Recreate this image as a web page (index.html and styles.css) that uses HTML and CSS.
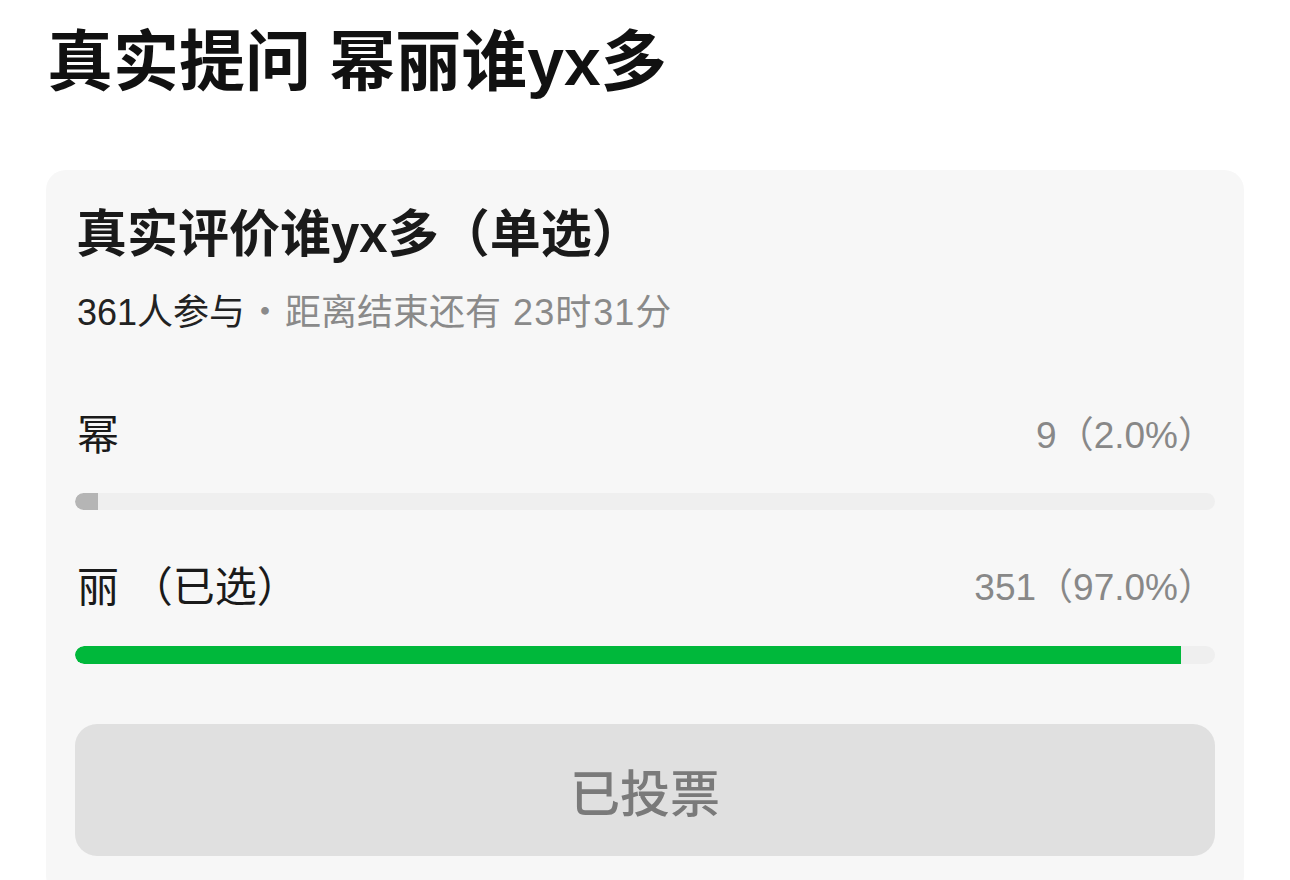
FILE: index.html
```html
<!DOCTYPE html>
<html lang="zh">
<head>
<meta charset="utf-8">
<link rel="stylesheet" href="styles.css">
</head>
<body>
<div class="page">
  <h1 class="title">真实提问 幂丽谁yx多</h1>
  <div class="card">
    <div class="poll-title">真实评价谁yx多（单选）</div>
    <div class="meta"><span class="meta-strong">361人参与</span><span class="dot">·</span>距离结束还有 <span class="num">23</span>时<span class="num">31</span>分</div>
    <div class="option first">
      <div class="opt-row">
        <span class="opt-label">幂</span>
        <span class="opt-count">9（2.0%）</span>
      </div>
      <div class="bar"><div class="fill fill-gray" style="width:2%"></div></div>
    </div>
    <div class="option second">
      <div class="opt-row">
        <span class="opt-label">丽 （已选）</span>
        <span class="opt-count">351（97.0%）</span>
      </div>
      <div class="bar"><div class="fill fill-green" style="width:97%"></div></div>
    </div>
    <div class="btn">已投票</div>
  </div>
</div>
</body>
</html>
```

FILE: styles.css
```css
html, body {
  margin: 0;
  padding: 0;
  background: #ffffff;
}
body {
  font-family: "Liberation Sans", "Noto Sans CJK SC", sans-serif;
  color: #1a1a1a;
}
.page {
  padding: 0 46px;
}
.title {
  margin: 29px 0 0 1px;
  height: 66px;
  font-size: 66px;
  line-height: 66px;
  font-weight: 700;
  color: #111;
}
.card {
  margin-top: 75px;
  background: #f7f7f7;
  border-radius: 20px;
  padding: 40px 29px 40px 29px;
  width: 1140px;
}
.poll-title {
  height: 50px;
  font-size: 51px;
  line-height: 50px;
  font-weight: 700;
  color: #1a1a1a;
  margin-left: 1px;
}
.meta {
  margin-top: 31px;
  height: 36px;
  font-size: 36px;
  line-height: 36px;
  color: #8a8a8a;
  margin-left: 2px;
}
.meta-strong {
  color: #222;
}
.num {
  letter-spacing: 1px;
  margin-left: 2px;
}
.dot {
  font-family: "Noto Sans CJK SC", sans-serif;
  margin: 0 2px;
}
.option.first {
  margin-top: 86px;
}
.option.second {
  margin-top: 55px;
}
.opt-row {
  display: flex;
  justify-content: space-between;
  align-items: flex-start;
  padding: 0 0 0 2px;
  height: 42px;
}
.opt-label {
  font-size: 42px;
  line-height: 46px;
  height: 42px;
  color: #1a1a1a;
}
.opt-count {
  font-size: 37px;
  line-height: 46px;
  height: 42px;
  color: #888;
}
.bar {
  margin-top: 38px;
  height: 17px;
  background: #efefef;
  border-radius: 9px;
  overflow: hidden;
}
.second .bar {
  height: 18px;
  margin-top: 39px;
}
.fill {
  height: 100%;
  border-radius: 9px 0 0 9px;
}
.fill-gray {
  background: #b5b5b5;
}
.fill-green {
  background: #00b83b;
}
.btn {
  margin-top: 60px;
  height: 132px;
  border-radius: 22px;
  background: #e0e0e0;
  display: flex;
  align-items: center;
  justify-content: center;
  font-family: "Noto Sans CJK SC", sans-serif;
  font-size: 50px;
  font-weight: 500;
  color: #7a7a7a;
}
```
